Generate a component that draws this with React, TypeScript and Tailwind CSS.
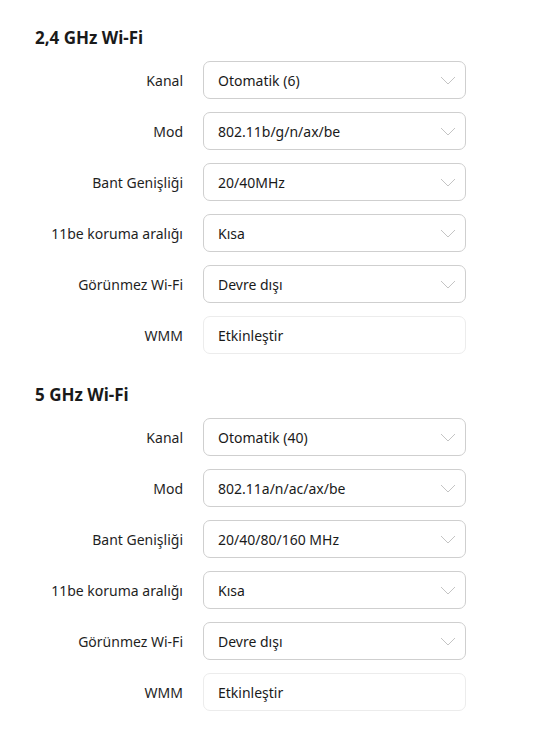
import React from "react";

type Row = { label: string; value: string; select: boolean };

const sections: { title: string; rows: Row[] }[] = [
  {
    title: "2,4 GHz Wi-Fi",
    rows: [
      { label: "Kanal", value: "Otomatik (6)", select: true },
      { label: "Mod", value: "802.11b/g/n/ax/be", select: true },
      { label: "Bant Genişliği", value: "20/40MHz", select: true },
      { label: "11be koruma aralığı", value: "Kısa", select: true },
      { label: "Görünmez Wi-Fi", value: "Devre dışı", select: true },
      { label: "WMM", value: "Etkinleştir", select: false },
    ],
  },
  {
    title: "5 GHz Wi-Fi",
    rows: [
      { label: "Kanal", value: "Otomatik (40)", select: true },
      { label: "Mod", value: "802.11a/n/ac/ax/be", select: true },
      { label: "Bant Genişliği", value: "20/40/80/160 MHz", select: true },
      { label: "11be koruma aralığı", value: "Kısa", select: true },
      { label: "Görünmez Wi-Fi", value: "Devre dışı", select: true },
      { label: "WMM", value: "Etkinleştir", select: false },
    ],
  },
];

function Chevron() {
  return (
    <svg width="16" height="9" viewBox="0 0 16 9" fill="none" className="shrink-0">
      <path d="M1 1 L8 8 L15 1" stroke="#bdbdbd" strokeWidth="0.9" />
    </svg>
  );
}

function Field({ row }: { row: Row }) {
  return (
    <div className="flex items-center">
      <div className="w-[148px] text-right text-[14px] text-[#1f1f1f]">{row.label}</div>
      <div
        className={
          row.select
            ? "ml-[20px] flex h-[38px] w-[263px] items-center justify-between rounded-[7px] border border-[#cfcfcf] bg-white pl-[14px] pr-[9px]"
            : "ml-[20px] flex h-[38px] w-[263px] items-center rounded-[7px] border border-[#ececec] bg-white pl-[14px]"
        }
      >
        <span className="text-[14px] text-[#1a1a1a]">{row.value}</span>
        {row.select && <Chevron />}
      </div>
    </div>
  );
}

export default function App() {
  return (
    <div
      className="min-h-[748px] w-full bg-white pl-[35px] pt-[26px]"
      style={{ fontFamily: '"Noto Sans", "Open Sans", sans-serif' }}
    >
      {sections.map((s, i) => (
        <div key={s.title} className={i === 0 ? "" : "mt-[29px]"}>
          <h2 className="h-[24px] text-[17px] font-bold leading-[24px] text-[#1a1a1a]">{s.title}</h2>
          <div className="mt-[11px] flex flex-col gap-[13px]">
            {s.rows.map((r) => (
              <Field key={r.label} row={r} />
            ))}
          </div>
        </div>
      ))}
    </div>
  );
}
